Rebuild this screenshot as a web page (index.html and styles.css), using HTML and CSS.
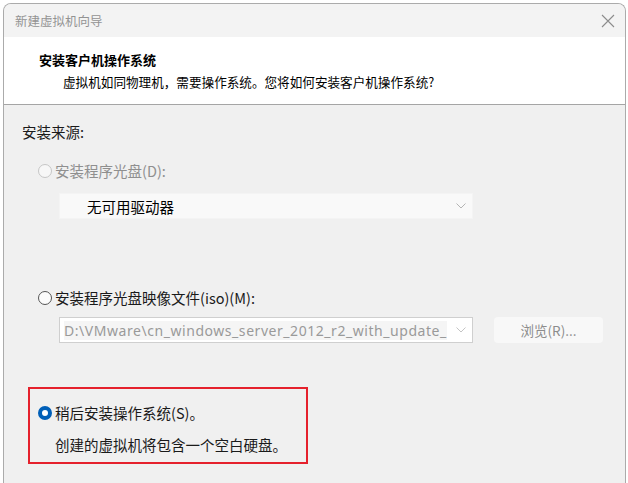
FILE: index.html
```html
<!doctype html>
<html lang="zh-CN">
<head>
    <meta charset="UTF-8">
    <title>新建虚拟机向导</title>
    <link rel="stylesheet" href="styles.css">
</head>
<body>
<div class="window">
    <div class="titlebar">
        <span class="title">新建虚拟机向导</span>
        <svg class="close" width="14" height="14" viewBox="0 0 14 14">
            <path d="M1 1 L13 13 M13 1 L1 13" stroke="#8c8c8c" stroke-width="1.1" fill="none"/>
        </svg>
    </div>
    <div class="header">
        <div class="head-title">安装客户机操作系统</div>
        <div class="head-sub">虚拟机如同物理机，需要操作系统。您将如何安装客户机操作系统?</div>
    </div>
    <div class="content">
        <div class="label">安装来源:</div>

        <div class="option disabled">
            <span class="radio"></span>
            <span>安装程序光盘(D):</span>
        </div>
        <div class="select">
            <span class="select-text">无可用驱动器</span>
            <svg class="chevron" width="10" height="6" viewBox="0 0 10 6">
                <path d="M0.5 0.5 L5 5 L9.5 0.5" stroke="#b4b4b4" stroke-width="1" fill="none"/>
            </svg>
        </div>

        <div class="option option-iso">
            <span class="radio"></span>
            <span>安装程序光盘映像文件(iso)(M):</span>
        </div>
        <div class="iso-row">
            <div class="combo">
                <span class="path">D:\VMware\cn_windows_server_2012_r2_with_update_</span>
                <svg class="chevron" width="10" height="6" viewBox="0 0 10 6">
                    <path d="M0.5 0.5 L5 5 L9.5 0.5" stroke="#c4c4c4" stroke-width="1" fill="none"/>
                </svg>
            </div>
            <div class="button">浏览(R)...</div>
        </div>

        <div class="later">
            <div class="option">
                <span class="radio checked"></span>
                <span>稍后安装操作系统(S)。</span>
            </div>
            <div class="later-note">创建的虚拟机将包含一个空白硬盘。</div>
        </div>
    </div>
</div>
</body>
</html>
```

FILE: styles.css
```css
html, body {
    margin: 0;
    padding: 0;
}

body {
    background-color: #fff;
    font-family: "Noto Sans CJK SC", "Noto Sans", sans-serif;
    color: #1a1a1a;
    overflow: hidden;
}

.window {
    margin: 3px 2px 0 3px;
    height: 480px;
    border: 1px solid #ababab;
    border-bottom: none;
    border-radius: 8px 8px 0 0;
    overflow: hidden;
    background-color: #f0f0f0;
}

.titlebar {
    height: 33px;
    display: flex;
    align-items: center;
    justify-content: space-between;
    padding: 0 10px 0 11px;
    background-color: #f3f3f3;
}

.title {
    font-size: 12.5px;
    color: #939393;
}

.close {
    display: block;
}

.header {
    height: 55px;
    padding: 12px 0 0 35px;
    background-color: #fff;
    border-bottom: 1px solid #a5a5a5;
}

.head-title {
    font-size: 13px;
    font-weight: bold;
    line-height: 22px;
    color: #000;
}

.head-sub {
    font-size: 12.6px;
    line-height: 22px;
    padding-left: 24px;
    color: #000;
}

.content {
    padding: 17px 0 0 18px;
    font-size: 14.5px;
}

.label {
    line-height: 20px;
}

.option {
    display: flex;
    align-items: center;
    line-height: 20px;
    margin: 19px 0 0 16px;
}

.option .radio {
    width: 12px;
    height: 12px;
    border: 1px solid #555;
    border-radius: 50%;
    background-color: #fcfcfc;
    margin-right: 3px;
    flex-shrink: 0;
}

.option.disabled {
    color: #8f8f8f;
}

.option.disabled .radio {
    border-color: #c6c6c6;
    background-color: #f7f7f7;
}

.radio.checked {
    width: 6px;
    height: 6px;
    border: 4px solid #005fb8;
    background-color: #fff;
}

.select {
    display: flex;
    align-items: center;
    justify-content: space-between;
    width: 414px;
    height: 26px;
    margin: 12px 0 0 37px;
    padding: 0 6px 0 27px;
    box-sizing: border-box;
    background-color: #f9f9f9;
    border: 1px solid #f4f4f4;
    color: #000;
}

.option-iso {
    margin-top: 69px;
}

.iso-row {
    display: flex;
    gap: 21px;
    margin: 9px 0 0 37px;
}

.combo {
    display: flex;
    align-items: center;
    justify-content: space-between;
    width: 414px;
    height: 26px;
    padding: 0 6px 0 4px;
    box-sizing: border-box;
    border: 1px solid #cfcfcf;
    background-color: #fff;
}

.path {
    font-family: "Noto Sans", "Noto Sans CJK SC", sans-serif;
    font-size: 14px;
    letter-spacing: 0.55px;
    color: #9a9a9a;
    background-color: #f5f5f5;
    white-space: nowrap;
    overflow: hidden;
}

.chevron {
    display: block;
    flex-shrink: 0;
}

.button {
    width: 109px;
    height: 26px;
    line-height: 26px;
    text-align: center;
    border-radius: 4px;
    background-color: #f8f8f8;
    color: #8c8c8c;
    font-size: 13.5px;
}

.later {
    width: 276px;
    height: 73px;
    margin: 44px 0 0 6px;
    border: 2px solid #e5212c;
}

.later .option {
    margin: 14px 0 0 8px;
}

.later-note {
    line-height: 20px;
    margin: 12px 0 0 25px;
}
```
